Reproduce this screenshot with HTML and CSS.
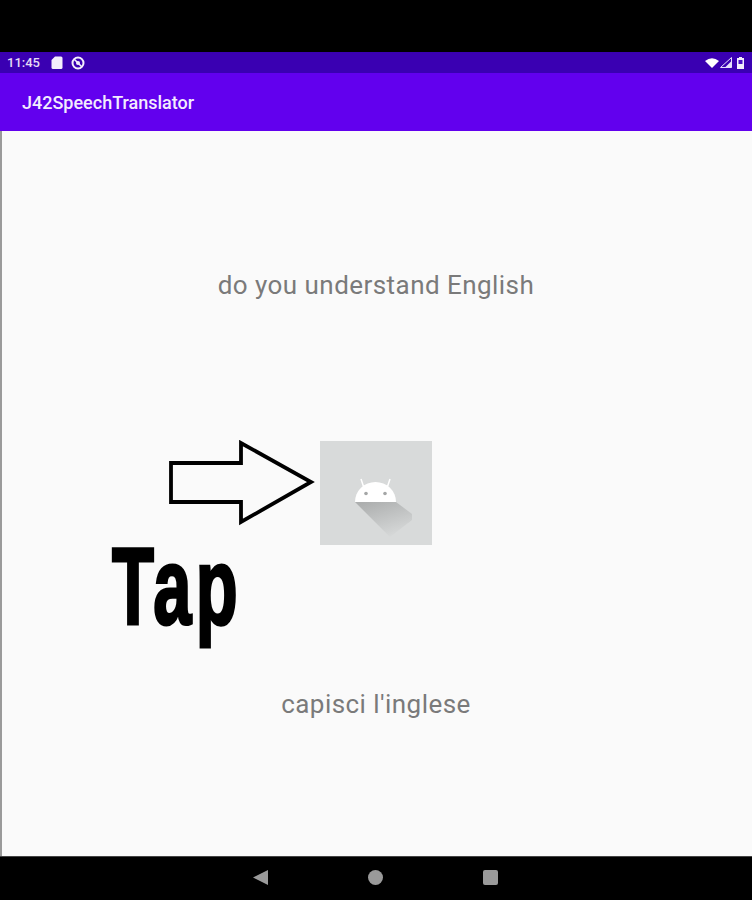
FILE: index.html
```html
<!DOCTYPE html>
<html lang="en">
<head>
<meta charset="utf-8">
<title>J42SpeechTranslator</title>
<link rel="stylesheet" href="styles.css">
</head>
<body>
<div class="screen">
  <div class="top-bezel"></div>
  <div class="status-bar">
    <div class="status-left">
      <span class="clock">11:45</span>
      <svg class="icon-sd" viewBox="0 0 12 13"><path d="M4 .5h6a1.5 1.5 0 0 1 1.5 1.5v9.500a1.500 1.500 0 0 1-1.500 1.500H2A1.500 1.500 0 0 1 .5 11.500V4z" fill="#f3eefc"/></svg>
      <svg class="icon-sync" viewBox="0 0 14 14"><circle cx="7" cy="7" r="5.500" fill="none" stroke="#f3eefc" stroke-width="2"/><path d="M3 3l8 8" stroke="#f3eefc" stroke-width="1.600"/><circle cx="7" cy="7" r="2" fill="#f3eefc"/></svg>
    </div>
    <div class="status-right">
      <svg class="icon-wifi" viewBox="0 0 14 10"><path d="M0 3Q7-2.500 14 3L7 10z" fill="#fff"/></svg>
      <svg class="icon-signal" viewBox="0 0 12 11"><path d="M11.500.5v10H.5z" fill="none" stroke="#e6defa" stroke-width="1"/><path d="M11.500 4v6.500H5z" fill="#e6defa"/></svg>
      <svg class="icon-battery" viewBox="0 0 7 12"><path d="M2 0h3v1h2v11H0V1h2z" fill="#f3eefc"/><rect x="1.500" y="3" width="4" height="4" fill="#4a12c4"/></svg>
    </div>
  </div>
  <header class="app-bar">J42SpeechTranslator</header>
  <main class="content">
    <p class="phrase phrase-source">do you understand English</p>
    <div class="mic-wrap">
      <div class="mic-button">
        <svg class="android" viewBox="0 0 112 104">
          <defs>
            <linearGradient id="shade" x1="0.200" y1="0" x2="0.700" y2="1">
              <stop offset="0" stop-color="#adafaf"/>
              <stop offset="1" stop-color="#d8dada"/>
            </linearGradient>
          </defs>
          <path d="M35 61H76L92 73V79L70 96z" fill="url(#shade)"/>
          <path d="M35 61a20.500 20 0 0 1 41 0z" fill="#fff"/>
          <path d="M44 47L41 38M67 47L70 38" stroke="#fff" stroke-width="1.500"/>
          <circle cx="46" cy="52.500" r="1.800" fill="#a4a6a6"/>
          <circle cx="65" cy="52.500" r="1.800" fill="#a4a6a6"/>
        </svg>
      </div>
      <svg class="arrow" viewBox="0 0 148 86"><path d="M3 23H73V3L143 42L73 82V62H3z" fill="#fafafa" stroke="#000" stroke-width="3.800"/></svg>
      <span class="tap">Tap</span>
    </div>
    <p class="phrase phrase-target">capisci l'inglese</p>
  </main>
  <nav class="nav-bar">
    <svg class="nav-back" viewBox="0 0 14 14"><path d="M14 0V14L0 7z" fill="#9a9a9a"/></svg>
    <span class="nav-home"></span>
    <span class="nav-recent"></span>
  </nav>
</div>
</body>
</html>
```
FILE: styles.css
```css
* { box-sizing: border-box; }
html, body { margin: 0; padding: 0; background: #000; }
.screen {
  width: 752px;
  height: 900px;
  display: flex;
  flex-direction: column;
  overflow: hidden;
  font-family: Roboto, "Liberation Sans", sans-serif;
}
.top-bezel { height: 52px; background: #000; }
.status-bar {
  height: 21px;
  background: #3a00b2;
  display: flex;
  align-items: center;
  justify-content: space-between;
  padding: 0 8px 0 7px;
}
.status-left, .status-right { display: flex; align-items: center; }
.clock { font-size: 13px; color: #e4dcf5; font-weight: 500; }
.icon-sd { width: 12px; height: 13px; margin-left: 11px; }
.icon-sync { width: 14px; height: 14px; margin-left: 8px; }
.icon-wifi { width: 14px; height: 10px; }
.icon-signal { width: 12px; height: 11px; margin-left: 1px; }
.icon-battery { width: 7px; height: 12px; margin-left: 5px; }
.app-bar {
  height: 58px;
  background: #6200ee;
  color: #f3ecfe;
  font-size: 18px;
  font-weight: 500;
  display: flex;
  align-items: center;
  padding-left: 22px;
}
.content {
  height: 725px;
  background: #fafafa;
  border-left: 2px solid #9a9a9a;
  display: flex;
  flex-direction: column;
  align-items: center;
  padding: 139px 2px 0 0;
}
.phrase {
  margin: 0;
  font-size: 26px;
  line-height: 30px;
  color: #7a7a7a;
  letter-spacing: 0.450px;
}
.mic-wrap { position: relative; margin-top: 141px; }
.mic-button { width: 112px; height: 104px; background: #d8dada; }
.android { display: block; width: 112px; height: 104px; }
.arrow {
  position: absolute;
  left: -152px;
  top: -1px;
  width: 148px;
  height: 86px;
}
.tap {
  position: absolute;
  left: -208px;
  top: 80px;
  font-weight: 700;
  font-family: "Liberation Sans", sans-serif;
  font-size: 109px;
  line-height: 130px;
  color: #000;
  -webkit-text-stroke: 3px #000;
  letter-spacing: 7px;
  transform: scaleX(0.63);
  transform-origin: left center;
}
.phrase-target { margin-top: 144px; }
.nav-bar {
  height: 44px;
  background: #000;
  border-top: 1px solid #444;
  display: flex;
  align-items: center;
  justify-content: center;
  gap: 100px;
  padding: 0 2px 2px 0;
}
.nav-back { width: 15px; height: 15px; }
.nav-home { width: 15px; height: 15px; border-radius: 50%; background: #9a9a9a; }
.nav-recent { width: 15px; height: 15px; border-radius: 2px; background: #9a9a9a; }
```
